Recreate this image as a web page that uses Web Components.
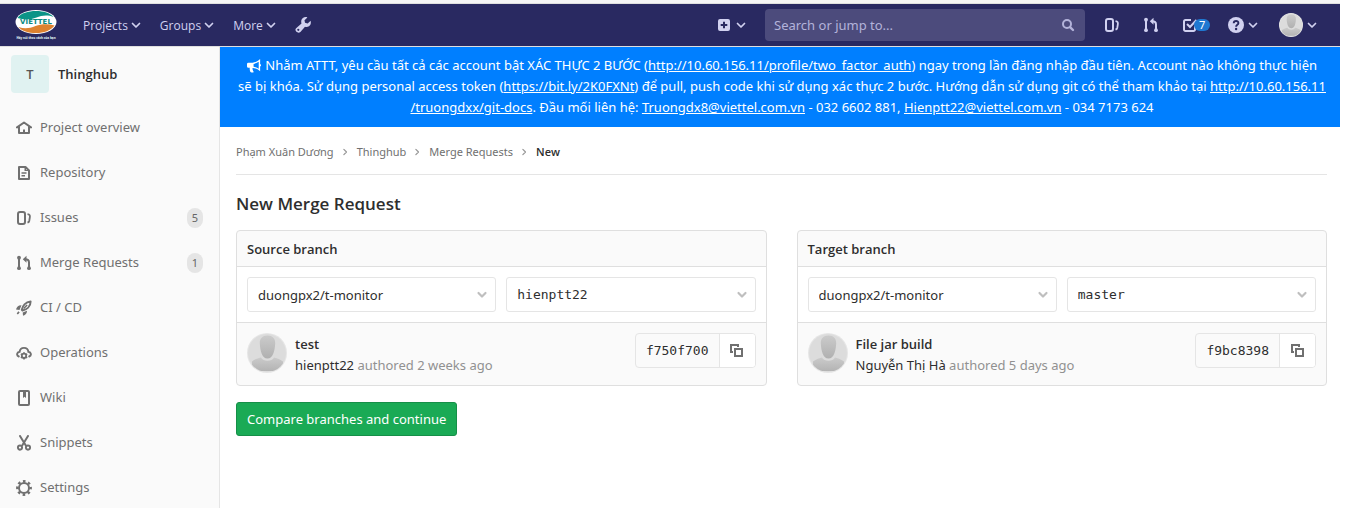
<!DOCTYPE html>
<html lang="vi">
<head>
<meta charset="utf-8">
<title>New Merge Request · Thinghub</title>
<style>
  html, body { margin: 0; height: 100%; background: #fff; }
  body { --strong: "Open Sans", sans-serif; font: 13px/21px "Noto Sans", "Open Sans", sans-serif; color: #2e2e2e; }
</style>
</head>
<body>
<gl-app>
  <gl-navbar slot="nav"></gl-navbar>
  <gl-sidebar slot="sidebar" name="Thinghub" initial="T">
    <gl-side-item icon="home">Project overview</gl-side-item>
    <gl-side-item icon="doc">Repository</gl-side-item>
    <gl-side-item icon="issues" count="5">Issues</gl-side-item>
    <gl-side-item icon="merge" count="1">Merge Requests</gl-side-item>
    <gl-side-item icon="rocket">CI / CD</gl-side-item>
    <gl-side-item icon="cloud">Operations</gl-side-item>
    <gl-side-item icon="book">Wiki</gl-side-item>
    <gl-side-item icon="scissors">Snippets</gl-side-item>
    <gl-side-item icon="gear">Settings</gl-side-item>
  </gl-sidebar>
  <gl-broadcast></gl-broadcast>
  <gl-breadcrumbs></gl-breadcrumbs>
  <gl-new-merge-request>
    <gl-branch-card heading="Source branch" project="duongpx2/t-monitor" branch="hienptt22"
      title-text="test" author="hienptt22" when="2 weeks ago" sha="f750f700"></gl-branch-card>
    <gl-branch-card heading="Target branch" project="duongpx2/t-monitor" branch="master"
      title-text="File jar build" author="Nguyễn Thị Hà" when="5 days ago" sha="f9bc8398"></gl-branch-card>
  </gl-new-merge-request>
</gl-app>

<script>
const ICONS = {
  chevron: '<path d="M4.500 6.500L8 10l3.500-3.500" fill="none" stroke="currentColor" stroke-width="1.700" stroke-linecap="round" stroke-linejoin="round"/>',
  caret: '<path d="M4.500 6L8 9.500 11.500 6" fill="none" stroke="currentColor" stroke-width="2.200" stroke-linecap="round" stroke-linejoin="round"/>',
  home: '<path d="M1 7.400L8 2.500l7 4.900M3 6.800V13h10V6.800" fill="none" stroke="currentColor" stroke-width="2" stroke-linecap="round" stroke-linejoin="round"/><path d="M7 9.500h2V13H7z"/>',
  doc: '<path d="M3 2h6.500L13 5.500V14H3z" fill="none" stroke="currentColor" stroke-width="2" stroke-linejoin="round"/><path d="M5.500 7.200h5v1.500h-5zM5.500 10h3.500v1.500H5.500zM8.500 2h1.500v3h3v1H8.500z"/>',
  issues: '<rect x="2" y="2" width="7" height="12" rx="2" fill="none" stroke="currentColor" stroke-width="2"/><path d="M11.500 4.200c2.300.3 2.700 1.200 2.300 3.300l-.5 3.200c-.2 1-.7 1.600-1.800 2" fill="none" stroke="currentColor" stroke-width="1.800"/>',
  merge: '<path d="M3 2.500v11M13 13V7.500C13 5.300 11.800 4.300 9 4.300" fill="none" stroke="currentColor" stroke-width="2"/><circle cx="3" cy="2.700" r="1.900"/><circle cx="3" cy="13.200" r="1.900"/><circle cx="13" cy="13.200" r="1.900"/><path d="M6.800 4.300L10.500.8v7z"/>',
  rocket: '<path d="M5.800 9.800C6.500 6 9.500 2 14.600 1.500 14.700 6.500 10.500 9.600 6.500 10.500z" fill="none" stroke="currentColor" stroke-width="2" stroke-linejoin="round"/><path d="M5.500 5.200L3.500 10 0 9.500C.5 7 2.500 5 5.500 5.200zM11 10.800c.2 1.800-1.200 4.400-4 5l-.3-3.200zM2.300 11.200l1.400 1.400L1.900 14.600.7 13.400zM10.600 4.400l1.100 1.100L8.200 9 7.100 7.900z"/>',
  cloud: '<path d="M2.800 11.500C.3 10.500.6 7.200 3.600 6.800 4.200 1.500 11.800 1.500 12.400 6.800c3 .4 3.300 3.700.8 4.700" fill="none" stroke="currentColor" stroke-width="1.900" stroke-linecap="round"/><circle cx="8" cy="10.800" r="2.200" fill="none" stroke="currentColor" stroke-width="1.800"/><path d="M7.200 7.300h1.600v1.300H7.200zM7.200 13h1.600v1.500H7.200zM4.400 9.600l.8-1.300 1.300.7-.8 1.300zM11.600 9.600l-.8-1.300-1.300.7.8 1.300zM4.400 12.100l.8 1.300 1.300-.7-.8-1.300zM11.600 12.100l-.8 1.300-1.300-.7.8-1.300z"/>',
  book: '<rect x="3" y="1" width="10" height="14" rx="1" fill="none" stroke="currentColor" stroke-width="2"/><path d="M7 2h3v6L8.500 6.800 7 8z"/>',
  scissors: '<path d="M4 1l5.800 9.500M12 1L6.200 10.500" fill="none" stroke="currentColor" stroke-width="2" stroke-linecap="round"/><circle cx="4" cy="12.600" r="2.100" fill="none" stroke="currentColor" stroke-width="1.900"/><circle cx="12" cy="12.600" r="2.100" fill="none" stroke="currentColor" stroke-width="1.900"/>',
  gear: '<circle cx="8" cy="8" r="5" fill="none" stroke="currentColor" stroke-width="2"/><circle cx="8" cy="8" r="6.700" fill="none" stroke="currentColor" stroke-width="2.400" stroke-dasharray="2.600 2.662" stroke-dashoffset="1.300"/>',
  wrench: '<path d="M15.600 3.800c.7 2.400-.1 4.400-1.600 5.400-1.400.9-2.800 1-4 .5l-4.600 5.200c-2.400 2.300-6.600-1.200-4.300-3.700L6.500 6.500C5.800 4.200 6.400 2.200 7.900 1 9.200 0 10.800-.2 12.400.4L9.500 3.200l.5 2.600 2.700.6z"/><circle cx="3.300" cy="12.800" r="1.100" fill="#292961"/>',
  plus: '<path fill-rule="evenodd" d="M4 2h8a2 2 0 0 1 2 2v8a2 2 0 0 1-2 2H4a2 2 0 0 1-2-2V4a2 2 0 0 1 2-2zm3 2.700V7H4.700v2H7v2.300h2V9h2.300V7H9V4.700z"/>',
  search: '<circle cx="7" cy="7" r="4" fill="none" stroke="currentColor" stroke-width="2"/><path d="M10.300 10.300L13 13" stroke="currentColor" stroke-width="2.400" stroke-linecap="round"/>',
  todo: '<path d="M13 9v3.500a1.500 1.500 0 0 1-1.500 1.500h-8A1.500 1.500 0 0 1 2 12.500v-8A1.500 1.500 0 0 1 3.500 3H9" fill="none" stroke="currentColor" stroke-width="2"/><path d="M5 7l3 3 6.500-7" fill="none" stroke="currentColor" stroke-width="2"/>',
  help: '<circle cx="8" cy="8" r="8"/><path d="M5.700 6.200C5.800 3.300 10.500 3.400 10.400 6.100 10.300 7.800 8.100 7.600 8.100 9.700" fill="none" stroke="#292961" stroke-width="1.900"/><circle cx="8.100" cy="12" r="1.200" fill="#292961"/>',
  copy: '<path d="M1 1h9v3H8V3H3v5h1v2H1z"/><path d="M6 6h7v7H6z" fill="none" stroke="currentColor" stroke-width="2"/>',
  horn: '<path fill-rule="evenodd" d="M14 1v5.500c1.300.3 1.300 2.200 0 2.500V14C11.500 12 9 10.800 6.300 10.600c-1 .6-.6 1.600.2 2.200-.5.700-.2 1.200.8 2C6.300 15.700 4 15.500 3.500 14.600 3.200 13.500 2.600 12.300 3 10.500H1.500A1.500 1.500 0 0 1 0 9V6.500A1.500 1.500 0 0 1 1.500 5H6C8.800 4.900 11.500 3.300 14 1zM12.500 4C10.700 5.300 8.900 6.100 7 6.300v2.900c1.900.2 3.800 1 5.500 2.200z"/>',
  person: '<defs><linearGradient id="g" x1="0" y1="0" x2="0" y2="1"><stop offset="0" stop-color="#cbcbcb"/><stop offset="1" stop-color="#b0b0b0"/></linearGradient><clipPath id="c"><circle cx="20" cy="20" r="19"/></clipPath></defs><circle cx="20" cy="20" r="20" fill="#e6e6e6"/><circle cx="20" cy="20" r="19" fill="#dcdcdc"/><g clip-path="url(#c)"><path d="M5 40V28.500C8 26 12 25 14 24.500c2 4.300 11 4.300 13 0 2 .5 6 1.500 9 4V38H5z" fill="url(#g)"/><path d="M20.500 2.500c5 0 8 3 7.700 8C27.800 18 26 25.500 20.500 25.500S13.200 18 12.800 10.500c-.3-5 2.700-8 7.700-8z" fill="url(#g)"/></g>'
};

class GlElement extends HTMLElement {
  connectedCallback() {
    if (this.shadowRoot) return;
    const t = document.createElement('template');
    t.innerHTML = `<style>*,:host{box-sizing:border-box}a{color:inherit;text-decoration:none}${this.styles()}</style>${this.markup()}`;
    this.attachShadow({ mode: 'open' }).append(t.content.cloneNode(true));
  }
  attr(n) { return this.getAttribute(n) || ''; }
}

customElements.define('gl-icon', class extends GlElement {
  styles() {
    return `:host{display:inline-block;flex:none;width:16px;height:16px}svg{display:block;width:100%;height:100%;fill:currentColor}`;
  }
  markup() {
    const n = this.attr('name');
    const box = n === 'person' ? '0 0 40 40' : '0 0 16 16';
    return `<svg viewBox="${box}" aria-hidden="true">${ICONS[n]}</svg>`;
  }
});

customElements.define('gl-app', class extends GlElement {
  styles() {
    return `:host{display:flex;flex-direction:column;height:100vh;margin-right:17px}
    .row{display:flex;flex:1;min-height:0}
    ::slotted([slot=sidebar]){flex:none;width:220px}
    main{flex:1;min-width:0}`;
  }
  markup() { return `<slot name="nav"></slot><div class="row"><slot name="sidebar"></slot><main><slot></slot></main></div>`; }
});

customElements.define('gl-navbar', class extends GlElement {
  styles() {
    return `:host{display:block;flex:none;border-top:3px solid #f5f5f5;color:#d1d1f0}
    header{display:flex;align-items:center;height:44px;padding:0 20px 0 15px;background:#292961;border-top:1px solid #dfdfdf;border-bottom:1px solid #dfdfdf}
    .logo{display:block;width:44px;height:32px}
    .logo svg{display:block}
    nav{display:flex;align-items:center;gap:16px;margin-left:24px;font-family:"Open Sans",sans-serif;font-size:12px}
    nav a{display:flex;align-items:center}
    .end{display:flex;align-items:center;margin-left:auto}
    .end a{display:flex;align-items:center}
    label{display:flex;align-items:center;width:320px;height:32px;margin:0 19px 0 16px;padding:0 9px;border-radius:4px;background:#4c4b7c}
    input{flex:1;min-width:0;border:0;padding:1px 0 0;background:none;color:inherit;font:inherit;outline:0}
    input::placeholder{color:#b3b3da;opacity:1}
    label gl-icon{color:#b3b3da}
    .icons{gap:23px}
    .todo{width:30px}
    .badge{position:relative;left:-4px;padding:0 5px;border-radius:6px;background:#1f78d1;color:#fff;font-size:11px;line-height:12px}
    .help{gap:1px;margin-left:16px}
    .user{gap:1px;margin-left:18px}
    .user gl-icon:first-child{width:24px;height:24px}
    .new{gap:1px}`;
  }
  markup() {
    const chev = '<gl-icon name="chevron"></gl-icon>';
    return `<header>
      <a class="logo" href="#" aria-label="Viettel">
        <svg width="44" height="32" viewBox="0 0 44 32">
          <ellipse cx="21" cy="13" rx="20.500" ry="12" fill="#fff"/>
          <path d="M2.500 9C6 4 13 2 21 2c8 0 14 2 17.500 6-6-2.500-12-1.500-17 .5-6 2.300-13 2.500-19 .5z" fill="#0b9487"/>
          <path d="M3.500 18c6 2 11 1.500 17-1 6-2.300 13-2.500 19-.500C36 21.500 29 24 21 24 13 24 7 22 3.500 18z" fill="#dd8230"/>
          <text x="21" y="15" text-anchor="middle" font-family="DejaVu Sans,sans-serif" font-weight="700" font-size="7" fill="#0b8a80">VIETTEL</text>
          <text x="21" y="30" text-anchor="middle" font-family="Open Sans,sans-serif" font-weight="700" font-size="3" fill="#e8ffff">Hãy nói theo cách của bạn</text>
        </svg>
      </a>
      <nav aria-label="Main">
        <a href="#">Projects${chev}</a><a href="#">Groups${chev}</a><a href="#">More${chev}</a>
        <a href="#" aria-label="Admin area"><gl-icon name="wrench"></gl-icon></a>
      </nav>
      <div class="end">
        <a class="new" href="#" aria-label="New"><gl-icon name="plus"></gl-icon>${chev}</a>
        <label><input type="search" placeholder="Search or jump to..." aria-label="Search or jump to..."><gl-icon name="search"></gl-icon></label>
        <div class="end icons">
          <a href="#" aria-label="Issues"><gl-icon name="issues"></gl-icon></a>
          <a href="#" aria-label="Merge requests"><gl-icon name="merge"></gl-icon></a>
          <a class="todo" href="#"><gl-icon name="todo"></gl-icon><span class="badge">7</span></a>
        </div>
        <a class="help" href="#" aria-label="Help"><gl-icon name="help"></gl-icon>${chev}</a>
        <a class="user" href="#" aria-label="User"><gl-icon name="person"></gl-icon>${chev}</a>
      </div>
    </header>`;
  }
});

customElements.define('gl-sidebar', class extends GlElement {
  styles() {
    return `:host{display:block;overflow-y:auto;scrollbar-width:none;background:#fafafa;border-right:1px solid #e5e5e5}
    .ctx{display:flex;align-items:center;gap:9px;padding:8px 10px 12px 11px;font-family:var(--strong);font-weight:600}
    .ava{display:grid;place-items:center;width:38px;height:38px;border-radius:4px;background:#e0f2f1;color:#555}`;
  }
  markup() {
    return `<a class="ctx" href="#"><span class="ava">${this.attr('initial')}</span><span>${this.attr('name')}</span></a><nav aria-label="Project"><slot></slot></nav>`;
  }
});

customElements.define('gl-side-item', class extends GlElement {
  styles() {
    return `:host{display:block}
    a{display:flex;align-items:center;gap:8px;height:45px;padding:0 16px;color:#707070}
    .t{flex:1}
    .n{min-width:16px;padding:0 5px;border-radius:10px;background:#e5e5e5;font-size:11px;line-height:20px;text-align:center;color:#666}`;
  }
  markup() {
    const c = this.attr('count');
    return `<a href="#"><gl-icon name="${this.attr('icon')}"></gl-icon><span class="t"><slot></slot></span>${c ? `<span class="n">${c}</span>` : ''}</a>`;
  }
});

customElements.define('gl-broadcast', class extends GlElement {
  styles() {
    return `:host{display:block;padding:8px 8px 9px 12px;background:#007fff;color:#fff;text-align:center}
    p{margin:0}
    a{text-decoration:underline}
    gl-icon{width:15px;height:15px;vertical-align:-3px}`;
  }
  markup() {
    return `<p><gl-icon name="horn"></gl-icon> Nhằm ATTT, yêu cầu tất cả các account bật XÁC THỰC 2 BƯỚC (<a href="#">http://10.60.156.11/profile/two_factor_auth</a>) ngay trong lần đăng nhập đầu tiên. Account nào không thực hiện <span>sẽ&nbsp;bị&nbsp;khóa. Sử dụng personal access token (</span><a href="#">https://bit.ly/2K0FXNt</a>) để pull, push code khi sử dụng xác thực 2 bước. Hướng dẫn sử dụng git có thể tham khảo tại <a href="#">http://10.60.156.11<wbr>/truongdxx/git-docs</a>. Đầu mối liên hệ: <a href="#">Truongdx8@viettel.com.vn</a> - 032 6602 881, <a href="#">Hienptt22@viettel.com.vn</a> - 034 7173 624</p>`;
  }
});

customElements.define('gl-breadcrumbs', class extends GlElement {
  styles() {
    return `:host{display:block;margin:0 13px 0 16px;border-bottom:1px solid #e5e5e5}
    ol{display:flex;align-items:center;height:47px;margin:0;padding:2px 0 0;list-style:none;font-size:11px;color:#707070}
    li{display:flex;align-items:center}
    li gl-icon{width:12px;height:12px;margin:0 6px 0 5px;transform:rotate(-90deg);color:#999}
    li:last-child{font-family:var(--strong);font-weight:600;color:#2e2e2e}`;
  }
  markup() {
    const li = t => `<li><a href="#">${t}</a><gl-icon name="chevron"></gl-icon></li>`;
    return `<nav aria-label="Breadcrumb"><ol>${['Phạm Xuân Dương', 'Thinghub', 'Merge Requests'].map(li).join('')}<li>New</li></ol></nav>`;
  }
});

customElements.define('gl-new-merge-request', class extends GlElement {
  styles() {
    return `:host{display:block;margin:16px 13px 0 16px}
    h1{margin:0 0 14px;font:600 17px/25px var(--strong)}
    .cards{display:grid;grid-template-columns:1fr 1fr;gap:30px}
    button{margin-top:16px;height:34px;padding:0 10px;border:1px solid #168f48;border-radius:3px;background:#1aaa55;color:#fff;font:inherit}`;
  }
  markup() {
    return `<h1>New Merge Request</h1><div class="cards"><slot></slot></div><button type="submit">Compare branches and continue</button>`;
  }
});

customElements.define('gl-branch-card', class extends GlElement {
  styles() {
    return `:host{display:block;min-width:0;border:1px solid #dfdfdf;border-radius:4px;background:#fafafa;overflow:hidden}
    h2{margin:0;padding:8px 10px 6px;font:600 13px/21px var(--strong)}
    .pick{display:grid;grid-template-columns:1fr 1fr;gap:10px;padding:10px;background:#fff;border:solid #dfdfdf;border-width:1px 0}
    .sel{display:grid;align-items:center}
    .sel>*{grid-area:1/1}
    select{appearance:none;width:100%;height:35px;padding:2px 30px 0 10px;border:1px solid #e5e5e5;border-radius:3px;background:#fff;color:#2e2e2e;font:inherit}
    select.mono{padding-top:0}
    .mono{font-family:"DejaVu Sans Mono",monospace}
    .sel gl-icon{justify-self:end;margin-right:6px;color:#bfbfbf;pointer-events:none}
    .commit{display:flex;gap:8px;padding:10px 10px 9px}
    .ava{width:40px;height:40px}
    .info{flex:1;min-width:0;padding-top:1px}
    .info b{display:block;font-family:var(--strong);font-weight:600}
    .muted{color:#919191}
    .sha{display:flex;height:35px;border:1px solid #e5e5e5;border-radius:4px;overflow:hidden}
    code{padding:0 10px;line-height:33px;font-size:13px}
    button{display:grid;place-items:center;width:36px;padding:0;border:0;border-left:1px solid #e5e5e5;background:#fff;color:#707070}`;
  }
  markup() {
    const h = this.attr('heading');
    const sel = (label, v, cls) => `<div class="sel"><select class="${cls}" aria-label="${label}"><option>${v}</option></select><gl-icon name="caret"></gl-icon></div>`;
    return `<h2>${h}</h2>
    <div class="pick">${sel(h + ' project', this.attr('project'), '')}${sel(h, this.attr('branch'), 'mono')}</div>
    <div class="commit"><gl-icon class="ava" name="person"></gl-icon>
      <div class="info"><b><a href="#">${this.attr('title-text')}</a></b><a href="#">${this.attr('author')}</a> <span class="muted">authored ${this.attr('when')}</span></div>
      <div class="sha"><code class="mono">${this.attr('sha')}</code><button type="button" aria-label="Copy commit SHA"><gl-icon name="copy"></gl-icon></button></div>
    </div>`;
  }
});
</script>
</body>
</html>
